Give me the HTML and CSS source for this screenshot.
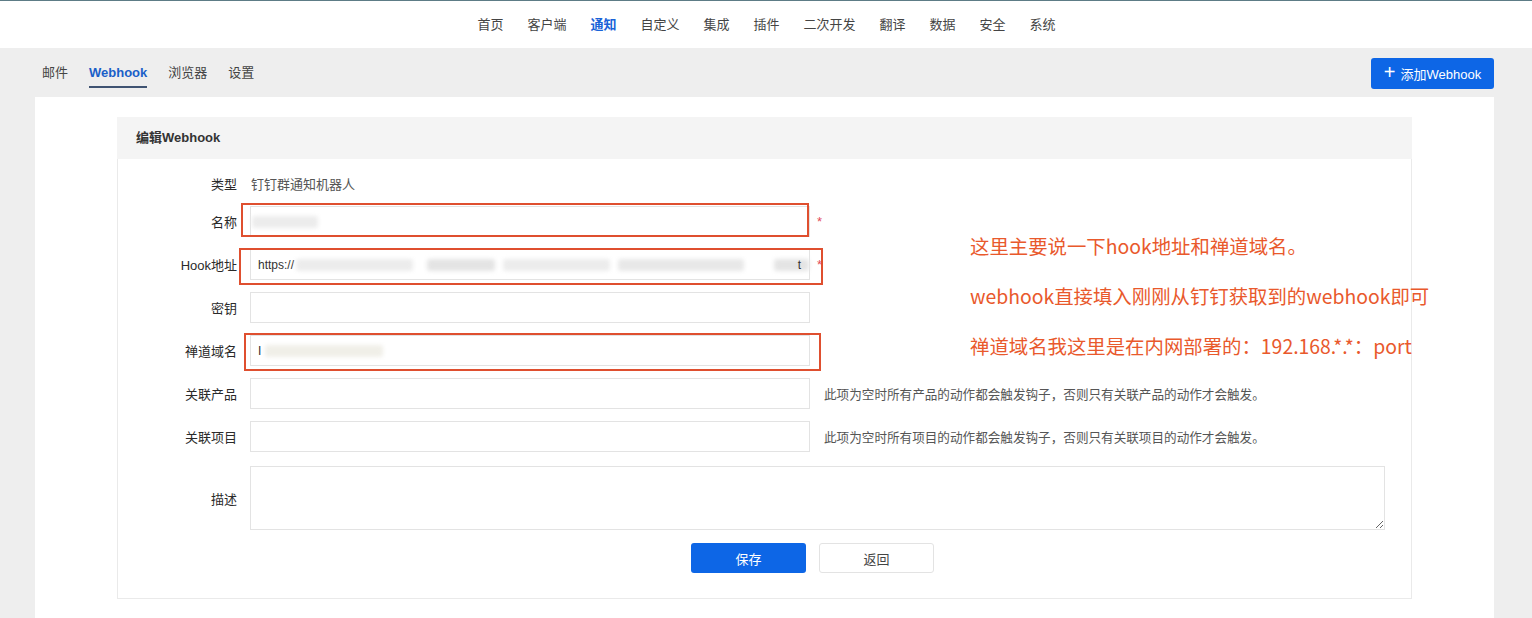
FILE: index.html
```html
<!DOCTYPE html>
<html lang="zh-CN">
<head>
<meta charset="utf-8">
<title>编辑Webhook</title>
<link rel="stylesheet" href="styles.css">
</head>
<body>
<header class="topbar">
  <nav class="mainnav">
    <a>首页</a><a>客户端</a><a class="active">通知</a><a>自定义</a><a>集成</a><a>插件</a><a>二次开发</a><a>翻译</a><a>数据</a><a>安全</a><a>系统</a>
  </nav>
</header>
<div class="subbar">
  <nav class="subnav">
    <a>邮件</a><a class="active">Webhook</a><a>浏览器</a><a>设置</a>
  </nav>
  <button class="btn-add"><span class="plus">+</span>添加Webhook</button>
</div>
<main class="main">
  <section class="panel">
    <div class="panel-head">编辑Webhook</div>
    <div class="form">
      <div class="row row-type">
        <label class="lbl">类型</label>
        <div class="val">钉钉群通知机器人</div>
      </div>
      <div class="row">
        <label class="lbl">名称</label>
        <div class="field">
          <div class="input"><span class="blur b1"></span></div>
          <span class="req">*</span>
          <span class="mark m1"></span>
        </div>
      </div>
      <div class="row">
        <label class="lbl">Hook地址</label>
        <div class="field">
          <div class="input url"><span class="txt">https://</span><span class="blur b2"></span><span class="blur b3"></span><span class="blur b4"></span><span class="blur b5"></span><span class="blur b6"></span><span class="txt tail">t</span></div>
          <span class="req">*</span>
          <span class="mark m2"></span>
        </div>
      </div>
      <div class="row">
        <label class="lbl">密钥</label>
        <div class="field"><div class="input"></div></div>
      </div>
      <div class="row">
        <label class="lbl">禅道域名</label>
        <div class="field">
          <div class="input"><span class="txt">I</span><span class="blur b7"></span></div>
          <span class="mark m3"></span>
        </div>
      </div>
      <div class="row">
        <label class="lbl">关联产品</label>
        <div class="field">
          <div class="input"></div>
          <span class="help">此项为空时所有产品的动作都会触发钩子，否则只有关联产品的动作才会触发。</span>
        </div>
      </div>
      <div class="row">
        <label class="lbl">关联项目</label>
        <div class="field">
          <div class="input"></div>
          <span class="help">此项为空时所有项目的动作都会触发钩子，否则只有关联项目的动作才会触发。</span>
        </div>
      </div>
      <div class="row row-desc">
        <label class="lbl">描述</label>
        <div class="field"><textarea class="textarea"></textarea></div>
      </div>
      <div class="actions">
        <button class="btn btn-primary">保存</button>
        <button class="btn btn-default">返回</button>
      </div>
    </div>
    <div class="note">
      <p>这里主要说一下hook地址和禅道域名。</p>
      <p>webhook直接填入刚刚从钉钉获取到的webhook即可</p>
      <p>禅道域名我这里是在内网部署的：192.168.*.*：port</p>
    </div>
  </section>
</main>
</body>
</html>
```
FILE: styles.css
```css
* { box-sizing: border-box; }
html, body { margin: 0; padding: 0; }
body {
  width: 1532px;
  height: 618px;
  overflow: hidden;
  background: #eeeeee;
  font-family: "Liberation Sans", "Noto Sans CJK SC", sans-serif;
  font-size: 13px;
  color: #333;
}
a { cursor: pointer; }

.topbar {
  height: 48px;
  background: #fff;
  border-top: 1px solid #5d7c86;
  display: flex;
  justify-content: center;
  align-items: center;
}
.mainnav { display: flex; gap: 24px; padding-left: 1px; }
.mainnav a { color: #444; font-size: 13px; line-height: 20px; }
.mainnav a.active { color: #1a63d8; font-weight: bold; }

.subbar {
  height: 49px;
  display: flex;
  align-items: center;
  justify-content: space-between;
  padding: 0 38px 0 42px;
}
.subnav { display: flex; gap: 21px; align-items: center; height: 49px; padding-top: 1px; }
.subnav a { color: #444; line-height: 20px; position: relative; }
.subnav a.active { color: #1a5fc8; font-weight: bold; }
.subnav a.active::after {
  content: "";
  position: absolute;
  left: 0; right: 0;
  bottom: -5px;
  height: 2px;
  background: #3f5372;
}
.btn-add {
  width: 123px;
  height: 31px;
  margin-top: 1px;
  border: 0;
  border-radius: 3px;
  background: #0d66e6;
  color: #fff;
  font-family: "Liberation Sans", "Noto Sans CJK SC", sans-serif;
  font-size: 13px;
  display: flex;
  align-items: center;
  justify-content: center;
  gap: 5px;
  padding: 0;
}
.btn-add .plus { font-size: 20px; line-height: 20px; font-weight: 300; margin-top: -2px; }

.main {
  margin: 0 38px 0 35px;
  background: #fff;
  height: 521px;
  padding: 20px 82px 0 82px;
}
.panel {
  position: relative;
  border: 1px solid #eaeaea;
  border-top: 0;
  height: 482px;
}
.panel-head {
  height: 42px;
  background: #f4f4f4;
  padding-left: 19px;
  line-height: 42px;
  font-weight: bold;
  color: #333;
  font-size: 13px;
  margin: 0 -1px;
}
.form { padding-top: 15px; }
.row {
  display: flex;
  align-items: center;
  margin-bottom: 12px;
}
.row-type { margin-bottom: 13px; }
.lbl {
  width: 132px;
  padding-right: 13px;
  text-align: right;
  color: #2a2a2a;
  flex: none;
}
.val { color: #555; padding-left: 1px; }
.field {
  position: relative;
  display: flex;
  align-items: center;
  flex: 1;
}
.input {
  width: 560px;
  height: 31px;
  border: 1px solid #e3e3e3;
  display: flex;
  align-items: center;
  padding-left: 7px;
  position: relative;
  flex: none;
}
.input .txt { color: #333; font-size: 12px; }
.input .tail { position: absolute; right: 8px; }
.blur {
  display: inline-block;
  height: 12px;
  background: #ececec;
  filter: blur(2px);
  border-radius: 3px;
}
.b1 { width: 66px; margin-left: -6px; }
.b2 { width: 120px; margin-left: 2px; }
.b3 { width: 70px; margin-left: 14px; background: #e4e4e4; }
.b4 { width: 110px; margin-left: 8px; }
.b5 { width: 130px; margin-left: 8px; background: #e8e8e8; }
.b6 { width: 36px; margin-left: 30px; background: #e4e4e4; }
.b7 { width: 118px; margin-left: 4px; background: #f0efe8; }
.req {
  color: #e34b5a;
  margin-left: 7px;
  font-size: 13px;
}
.help { margin-left: 14px; color: #555; font-size: 12.6px; }
.mark {
  position: absolute;
  border: 2px solid #df4f2f;
  pointer-events: none;
}
.m1 { left: -9px; top: -3px; width: 568px; height: 34px; }
.m2 { left: -11px; top: -1px; width: 584px; height: 37px; }
.m3 { left: -6px; top: -2px; width: 577px; height: 38px; }

.row-desc { margin-top: 14px; margin-bottom: 13px; }
.textarea {
  width: 1135px;
  height: 64px;
  border: 1px solid #e3e3e3;
  resize: vertical;
  display: block;
  font-family: inherit;
}
.actions {
  display: flex;
  gap: 13px;
  padding-left: 573px;
}
.btn {
  width: 115px;
  height: 30px;
  border-radius: 3px;
  font-family: "Liberation Sans", "Noto Sans CJK SC", sans-serif;
  font-size: 13px;
  padding: 0;
}
.btn-primary { background: #0d66e6; color: #fff; border: 0; }
.btn-default { background: #fff; color: #444; border: 1px solid #e3e3e3; }

.note {
  position: absolute;
  left: 852px;
  top: 115px;
  color: #e9592c;
  font-family: "Noto Sans CJK SC", sans-serif;
  font-size: 19.4px;
  line-height: 28px;
}
.note p { margin: 0 0 22px 0; white-space: nowrap; }
```
